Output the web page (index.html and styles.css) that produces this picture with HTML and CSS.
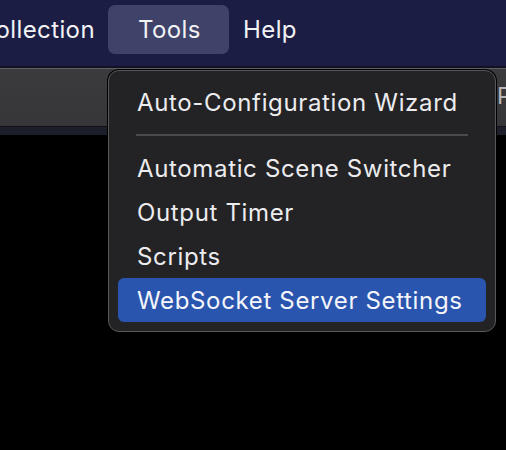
FILE: index.html
```html
<!DOCTYPE html>
<html>
<head>
<meta charset="utf-8">
<link rel="stylesheet" href="styles.css">
</head>
<body>
<div class="app">
  <div class="menubar">
    <div class="mb-item mb-first">Scene Collection</div>
    <div class="mb-item mb-active">Tools</div>
    <div class="mb-item mb-help">Help</div>
  </div>
  <div class="toolbar">
    <div class="toolbar-title">Properties</div>
  </div>
  <div class="strip"></div>
  <div class="canvas"></div>

  <div class="menu">
    <div class="menu-row">Auto-Configuration Wizard</div>
    <div class="menu-sep"></div>
    <div class="menu-row">Automatic Scene Switcher</div>
    <div class="menu-row">Output Timer</div>
    <div class="menu-row">Scripts</div>
    <div class="menu-row menu-row-active">WebSocket Server Settings</div>
  </div>
</div>
</body>
</html>
```
FILE: styles.css
```css
* { box-sizing: border-box; }
html, body {
  margin: 0;
  padding: 0;
  background: #000;
  width: 506px;
  height: 450px;
  overflow: hidden;
  font-family: Inter, "Noto Sans", sans-serif;
  -webkit-font-smoothing: antialiased;
}
.app {
  position: relative;
  width: 506px;
  height: 450px;
  display: flex;
  flex-direction: column;
}
.menubar {
  height: 68px;
  background: #1b1d45;
  display: flex;
  align-items: center;
  color: #f2f2f5;
  font-size: 24px;
  letter-spacing: 0.4px;
  border-bottom: 2px solid #111224;
  white-space: nowrap;
}
.mb-item {
  height: 49px;
  display: flex;
  align-items: center;
  border-radius: 7px;
  margin-top: -7px;
  flex-shrink: 0;
}
.mb-first {
  margin-left: -205px;
  width: 300px;
  justify-content: flex-end;
}
.mb-active {
  margin-left: 13px;
  width: 121px;
  padding-left: 30px;
  background: #3f4369;
}
.mb-help {
  margin-left: 14px;
}
.toolbar {
  height: 58px;
  background: linear-gradient(#3b3a3d, #363538);
  border-top: 1px solid #5e5d60;
  display: flex;
  align-items: center;
  padding-left: 497px;
  overflow: hidden;
  white-space: nowrap;
}
.toolbar-title {
  color: #b8b8bb;
  font-size: 23px;
  margin-top: -4px;
}
.strip {
  height: 9px;
  background: #1c1e2a;
  border-top: 1px solid #101018;
}
.canvas {
  flex: 1;
  background: #000;
}
.menu {
  position: absolute;
  left: 108px;
  top: 70px;
  width: 388px;
  height: 262px;
  background: #232325;
  border: 1px solid #58585a;
  box-shadow: 0 0 0 1px #000;
  border-radius: 11px;
  padding: 9px 9px;
  display: flex;
  flex-direction: column;
  color: #ececef;
  font-size: 24px;
  letter-spacing: 0.65px;
}
.menu-row {
  height: 44px;
  display: flex;
  align-items: center;
  padding-left: 19px;
  border-radius: 6px;
  white-space: nowrap;
}
.menu-sep {
  height: 22px;
  position: relative;
}
.menu-sep::after {
  content: "";
  position: absolute;
  left: 18px;
  right: 18px;
  top: 10px;
  height: 2px;
  background: #4a4a4c;
}
.menu-row-active {
  background: #2a55ae;
  color: #f4f5fa;
}
```
